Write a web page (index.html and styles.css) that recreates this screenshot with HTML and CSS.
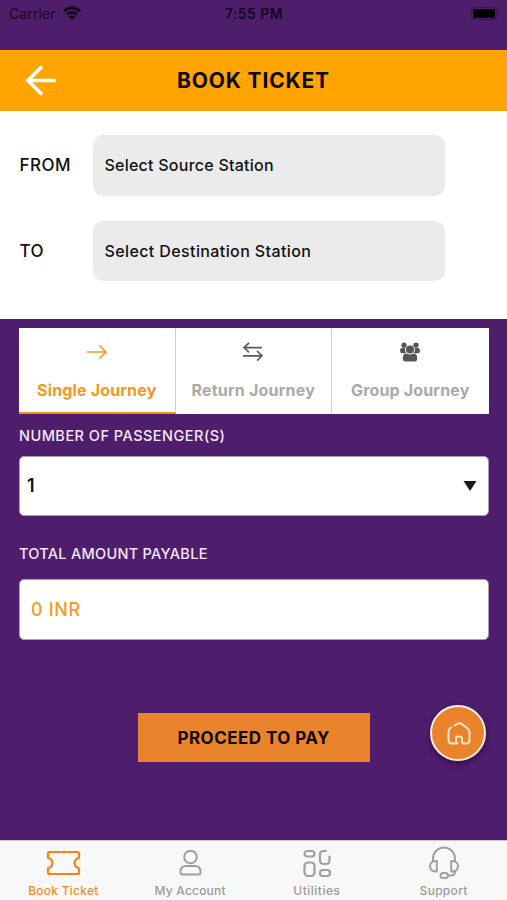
FILE: index.html
```html
<!DOCTYPE html>
<html lang="en">
<head>
<meta charset="utf-8">
<title>Book Ticket</title>
<link rel="stylesheet" href="styles.css">
</head>
<body>
<div class="screen">
  <div class="status">
    <div class="carrier"><span class="carrier-name">Carrier</span>
      <svg width="18" height="14" viewBox="0 0 18 14" fill="none" stroke="#0b0313" stroke-width="2.6"><path d="M1 5.2a11.3 11.3 0 0 1 16 0M4 8.5a7 7 0 0 1 10 0"/><path d="M9 13.8 5.9 10.7a4.4 4.4 0 0 1 6.2 0Z" fill="#0b0313" stroke="none"/></svg>
    </div>
    <span class="clock">7:55 PM</span>
    <svg class="battery" width="30" height="14" viewBox="0 0 30 14"><rect x=".5" y=".5" width="25" height="12" rx="3.5" fill="none" stroke="#38124f"/><rect x="2" y="2" width="22" height="9" rx="1.8" fill="#000"/><path d="M27 4.5q2 2 0 4Z" fill="#38124f"/></svg>
  </div>
  <header class="header">
    <svg class="back" width="32" height="32" viewBox="0 0 32 32" fill="none" stroke="#fff" stroke-width="3.6"><path d="M31 16.500H3.500M17 2.500 3 16.500l14 14"/></svg>
    <h1 class="title">BOOK TICKET</h1>
  </header>
  <section class="stations">
    <div class="row"><span class="row-label">FROM</span><div class="station"><span class="source">Select Source Station</span></div></div>
    <div class="row"><span class="row-label">TO</span><div class="station"><span class="destination">Select Destination Station</span></div></div>
  </section>
  <main class="booking">
    <div class="tabs">
      <div class="tab active">
        <svg width="22" height="18" viewBox="0 0 22 18" fill="none" stroke="#fb961b" stroke-width="1.6"><path d="M1 9h19M13.500 2.500l6.500 6.500-6.500 6.500"/></svg>
        <span>Single Journey</span>
      </div>
      <div class="tab">
        <svg width="22" height="20" viewBox="0 0 22 20" fill="none" stroke="#5b5b5b" stroke-width="1.7"><path d="M7 .8 2 5.600l5 4.800M2 5.600h18M1 13.800h18.500M15 9l5 4.800-5 4.800"/></svg>
        <span class="return">Return Journey</span>
      </div>
      <div class="tab">
        <svg width="22" height="20" viewBox="0 0 22 20" fill="#555"><circle cx="5" cy="3.200" r="2.600"/><circle cx="17" cy="3.200" r="2.600"/><path d="M1 8.700q0-2.700 2.400-2.700h2.700q-.5 3 1.200 5.300H3.200Q1 11.300 1 8.700ZM21 8.700q0-2.700-2.400-2.700h-2.700q.5 3-1.200 5.300h4.100Q21 11.300 21 8.700Z"/><circle cx="11" cy="7.600" r="4"/><path d="M3.800 16.500q0-5 3.600-5 3.600 2 7.200 0 3.600 0 3.600 5 0 3-2.600 3H6.400q-2.600 0-2.600-3Z"/></svg>
        <span>Group Journey</span>
      </div>
    </div>
    <div class="label passengers">NUMBER OF PASSENGER(S)</div>
    <div class="field select"><span>1</span><svg width="14" height="10" viewBox="0 0 14 10"><path d="M.5 0h13L7 10Z" fill="#1b1b1b"/></svg></div>
    <div class="label amount">TOTAL AMOUNT PAYABLE</div>
    <div class="field total"><span>0 INR</span></div>
    <div class="actions">
      <button class="pay"><span>PROCEED TO PAY</span></button>
    </div>
    <div class="home">
      <svg width="24" height="24" viewBox="0 0 24 24" fill="none" stroke="#ffe9ce" stroke-width="1.9" stroke-linecap="round" stroke-linejoin="round"><path d="M4.100 6.500Q1.500 8 1.500 11v8q0 3.500 3.500 3.500h5.500h-1.500v-5q0-2 2-2h1.500q2.500 0 2.500 2v3q0 2 2 2h2q3.500 0 3.500-3.500v-8q0-2-1.500-3.200l-6.400-4.900q-2-1.500-4 0L7.500 4.300"/></svg>
    </div>
  </main>
  <nav class="nav">
    <div class="nav-item current">
      <svg width="36" height="28" viewBox="0 0 36 28" fill="none" stroke="#f78311" stroke-width="2.200" stroke-linejoin="round"><path d="M4.500 3h28q1.500 0 1.500 1.500v4.200q-4.500 1.500-4.500 5.300t4.500 5.300v4.200q0 1.500-1.500 1.500h-28q-1.500 0-1.500-1.500v-4.200q4.500-1.500 4.500-5.300T3 8.700V4.500Q3 3 4.500 3Z"/></svg>
      <span class="n-ticket">Book Ticket</span>
    </div>
    <div class="nav-item">
      <svg width="28" height="28" viewBox="0 0 28 28" fill="none" stroke="#a0a0a0" stroke-width="2"><circle cx="14.500" cy="8" r="6.300"/><path d="M4.500 22.500q0-5.500 5.500-5.500h9q5.500 0 5.500 5.500v1q0 2-2 2h-16q-2 0-2-2Z"/></svg>
      <span class="n-account">My Account</span>
    </div>
    <div class="nav-item">
      <svg width="30" height="30" viewBox="0 0 30 30" fill="none" stroke="#a0a0a0" stroke-width="2.200"><rect x="2.500" y="3" width="10" height="5.500" rx="2.700"/><rect x="2.500" y="14.500" width="10" height="13.500" rx="3.500"/><rect x="18" y="22" width="10" height="6" rx="2.700"/><path d="M24 3h-2.500Q18 3 18 6.500V12q0 4 3.500 4H24q3.500 0 3.500-4V8.500" stroke-linecap="round"/></svg>
      <span class="n-utilities">Utilities</span>
    </div>
    <div class="nav-item">
      <svg width="32" height="34" viewBox="0 0 32 34" fill="none" stroke="#a0a0a0" stroke-width="2" stroke-linejoin="round"><path d="M5 15v-2.500a11 11 0 0 1 22 0V15M8.800 15v10.500Q2 25.500 2 20.200T8.800 15ZM23.200 15v10.500q6.800 0 6.800-5.300T23.200 15ZM27 24v1.500q0 4-4 4h-3"/><rect x="12.500" y="27" width="7.500" height="5" rx="2.500"/></svg>
      <span class="n-support">Support</span>
    </div>
  </nav>
</div>
</body>
</html>
```
FILE: styles.css
```css
* { box-sizing: border-box; }
body { margin: 0; font-family: Inter, "Liberation Sans", sans-serif; }
svg { display: block; flex: none; }
span { white-space: nowrap; }
.screen { width: 507px; height: 900px; display: flex; flex-direction: column; background: #4e1d6c; overflow: hidden; }
.status { height: 50px; padding: 5px 8px 0 9px; display: grid; grid-template-columns: 1fr auto 1fr; align-items: start; color: #14071d; line-height: 18px; }
.carrier { display: flex; gap: 7px; }
.carrier-name { font-size: 14px; letter-spacing: .1px; }
.carrier svg { margin-top: 1px; }
.clock { font-size: 14px; font-weight: 600; letter-spacing: .45px; }
.battery { justify-self: end; margin: 2px -2px 0 0; }
.header { height: 60.500px; background: #ffa400; display: grid; grid-template-columns: 1fr auto 1fr; align-items: center; padding: 0 25px; }
.title { margin: 0; font-size: 21px; font-weight: 700; letter-spacing: .85px; color: #0b0703; white-space: nowrap; }
.stations { height: 208.500px; background: #fff; padding: 24.500px 19px 0; display: flex; flex-direction: column; gap: 25px; }
.row { display: flex; align-items: center; height: 60.500px; }
.row-label { width: 73.500px; padding-left: .5px; font-size: 17px; font-weight: 500; letter-spacing: .5px; color: #111; }
.station { width: 352.500px; height: 100%; border-radius: 10px; background: #ebebeb; display: flex; align-items: center; padding-left: 12px; font-size: 16px; font-weight: 500; color: #111; }
.source { letter-spacing: .24px; }
.destination { letter-spacing: .39px; }
.booking { height: 521px; padding: 9px 18.500px 0 19px; position: relative; }
.tabs { height: 86px; display: grid; grid-template-columns: repeat(3, 1fr); background: #fff; }
.tab { display: flex; flex-direction: column; align-items: center; padding-top: 14px; border-right: 1px solid #d0d0d0; font-size: 16px; font-weight: 700; letter-spacing: .16px; color: #aaa; line-height: 20px; }
.tab:last-child { border-right: 0; }
.tab svg { height: 20px; }
.tab span { margin-top: 18px; }
.tab .return { letter-spacing: .22px; }
.tab.active { color: #fb961b; border-bottom: 2px solid #f28b18; }
.label { font-size: 14.500px; font-weight: 500; line-height: 20px; color: #f5e8fc; white-space: nowrap; }
.passengers { margin-top: 12px; letter-spacing: .48px; }
.field { height: 60.500px; border: 1px solid #a99db1; border-radius: 5px; background: #fff; display: flex; align-items: center; }
.select { margin-top: 9.500px; justify-content: space-between; padding: 0 11px 0 7px; font-size: 18px; font-weight: 600; color: #111; }
.amount { margin-top: 28px; letter-spacing: .28px; }
.total { margin-top: 15px; padding-left: 11px; font-size: 18px; font-weight: 500; letter-spacing: .65px; color: #fb9a20; }
.actions { display: flex; justify-content: center; margin-top: 73.500px; }
.pay { width: 232px; height: 49px; border: 0; background: #e9842c; font: 700 17px Inter, sans-serif; letter-spacing: .45px; color: #100803; padding: 0; }
.home { position: absolute; left: 430px; top: 386px; width: 56px; height: 56px; border: 2px solid #fff0e8; border-radius: 50%; background: #e9842c; display: flex; align-items: center; justify-content: center; padding-left: 1px; box-shadow: 0 3px 5px rgba(25, 0, 45, .5); }
.nav { height: 60px; background: #f8f8f8; display: grid; grid-template-columns: repeat(4, 1fr); border-top: 1px solid #cfc4d5; }
.nav-item { display: flex; flex-direction: column; align-items: center; justify-content: flex-end; font-size: 12px; font-weight: 500; color: #9b9b9b; line-height: 14px; padding-bottom: 2px; }
.nav-item svg { margin-bottom: 7px; }
.nav-item:nth-child(3) svg { margin-bottom: 6px; }
.nav-item:nth-child(4) svg { margin-bottom: 4px; }
.current { color: #f78d2a; }
.n-ticket { letter-spacing: .25px; }
.n-account { letter-spacing: .2px; }
.n-utilities { letter-spacing: .5px; }
.n-support { letter-spacing: .3px; }
```
